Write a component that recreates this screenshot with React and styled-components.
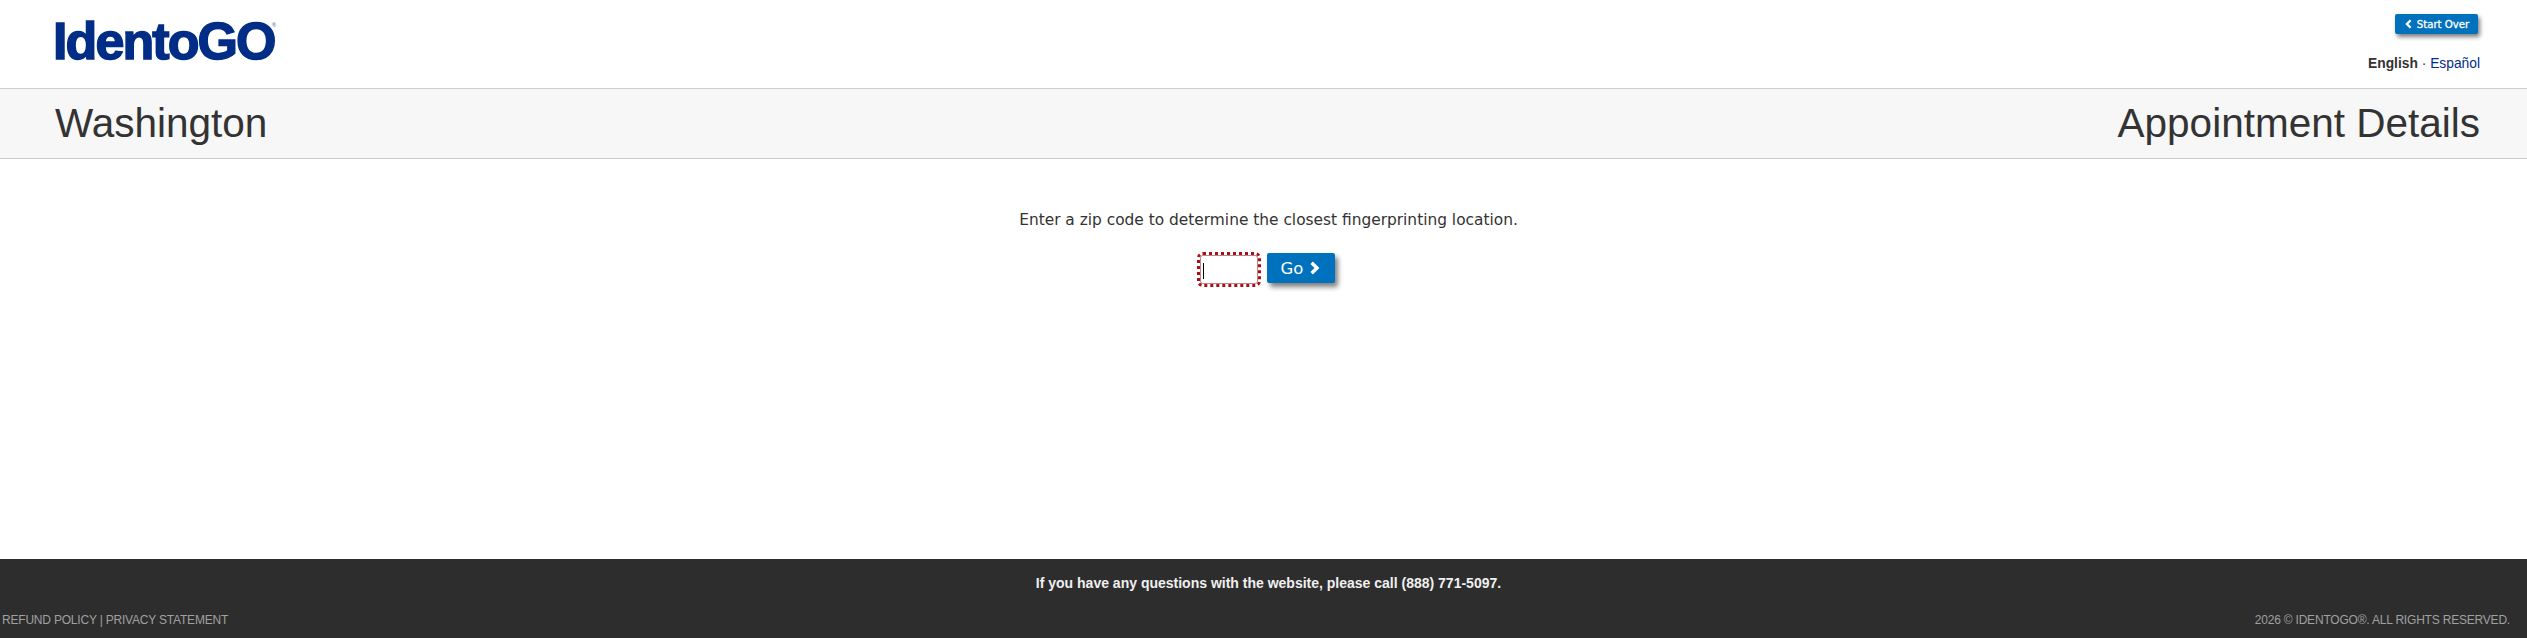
import React from "react";
import styled, { createGlobalStyle } from "styled-components";

const Global = createGlobalStyle`
  html, body { margin: 0; padding: 0; background: #fff; }
  body { font-family: "Liberation Sans", Arial, sans-serif; color: #333; }
`;
const Page = styled.div`
  height: 638px; display: flex; flex-direction: column; overflow: hidden;
`;
const Header = styled.header`
  height: 88px; box-sizing: border-box; padding: 15px 47px 0 53px;
  display: flex; justify-content: space-between; align-items: flex-start;
`;
const Logo = styled.div`
  display: flex; align-items: flex-start; color: #012d87; font-size: 52px; line-height: 52px;
  font-weight: 700; letter-spacing: -1.9px; -webkit-text-stroke: 1.5px #012d87; height: 52px;
`;
const Reg = styled.span`
  font-size: 6px; line-height: 6px; letter-spacing: 0; -webkit-text-stroke: 0; color: #7b8cb8;
  margin: 7px 0 0 -3px;
`;
const HeaderRight = styled.div`
  display: flex; flex-direction: column; align-items: flex-end; margin-top: -1px;
`;
const SmallButton = styled.button`
  height: 20px; width: 83px; border: 0; border-radius: 2px; padding: 0; background: #0071bc; color: #fff;
  font: 400 10.2px "DejaVu Sans", Verdana, sans-serif; -webkit-text-stroke: .3px #fff; margin-right: 2px;
  box-shadow: 2px 3px 4px rgba(0,0,0,.5); display: flex; align-items: center; justify-content: center; gap: 3px;
`;
const Lang = styled.div`
  margin-top: 21px; font-size: 13.8px; line-height: 18px; color: #333;
`;
const LangLink = styled.a` color: #012d87; `;
const Band = styled.div`
  height: 71px; box-sizing: border-box; background: #f7f7f7; border-top: 1px solid #ccc; border-bottom: 1px solid #ccc;
  padding: 0 47px 0 55px; display: flex; justify-content: space-between; align-items: center;
`;
const Title = styled.h1`
  margin: 0; font-size: 40.5px; line-height: 69px; font-weight: 400; color: #333;
`;
const Main = styled.main`
  flex: 1; display: flex; flex-direction: column; align-items: center; padding: 51px 0 0 10px;
`;
const Prompt = styled.p`
  margin: 0; font: 400 15.4px/20px "DejaVu Sans", Verdana, sans-serif; color: #333;
`;
const FormRow = styled.div`
  margin: 23px 5px 0 0; display: flex; align-items: flex-start; gap: 6px;
`;
const ZipBox = styled.div`
  width: 58px; height: 29px; box-sizing: border-box; background: #fff; border: 1px solid #b9878b; border-radius: 3px;
  outline: 3px dotted #a80f16; margin: 2px 3px 3px;
  display: flex; align-items: center; padding: 3px 0 0 2px;
`;
const Caret = styled.span` display: block; width: 1px; height: 16px; background: #000; `;
const GoButton = styled.button`
  width: 68px; height: 30px; border: 0; border-radius: 2px; padding: 0; background: #0071bc; color: #fff;
  font: 400 16.5px "DejaVu Sans", Verdana, sans-serif; box-shadow: 3px 4px 5px rgba(0,0,0,.5);
  display: flex; align-items: center; justify-content: center; gap: 4px;
`;
const Footer = styled.footer`
  height: 79px; background: #2d2d2d; display: flex; flex-direction: column;
`;
const Question = styled.div`
  margin-top: 15px; padding-left: 10px; text-align: center; font-size: 14px; line-height: 18px; font-weight: 700; color: #f0f0f0;
`;
const Legal = styled.div`
  margin-top: 20px; padding: 0 17px 0 2px; display: flex; justify-content: space-between;
  font-size: 12px; letter-spacing: -.2px; line-height: 16px; color: #a0a0a0;
`;
const Chevron = ({ dir, size, w }) => (
  <svg width={size} height={size} viewBox="0 0 12 12" aria-hidden="true">
    <path d={dir === "left" ? "M8 1.5 3.5 6 8 10.5" : "M4 1.5 8.5 6 4 10.5"} fill="none" stroke="#fff" strokeWidth={w} />
  </svg>
);

export default function App() {
  return (
    <Page>
      <Global />
      <Header>
        <Logo>IdentoGO<Reg>®</Reg></Logo>
        <HeaderRight>
          <SmallButton><Chevron dir="left" size={10} w={2.8} />Start Over</SmallButton>
          <Lang><b>English</b> · <LangLink>Español</LangLink></Lang>
        </HeaderRight>
      </Header>
      <Band>
        <Title>Washington</Title>
        <Title>Appointment Details</Title>
      </Band>
      <Main>
        <Prompt>Enter a zip code to determine the closest fingerprinting location.</Prompt>
        <FormRow>
          <ZipBox><Caret /></ZipBox>
          <GoButton>Go<Chevron dir="right" size={14} w={3} /></GoButton>
        </FormRow>
      </Main>
      <Footer>
        <Question>If you have any questions with the website, please call (888) 771-5097.</Question>
        <Legal><span>REFUND POLICY | PRIVACY STATEMENT</span><span>2026 © IDENTOGO®. ALL RIGHTS RESERVED.</span></Legal>
      </Footer>
    </Page>
  );
}
